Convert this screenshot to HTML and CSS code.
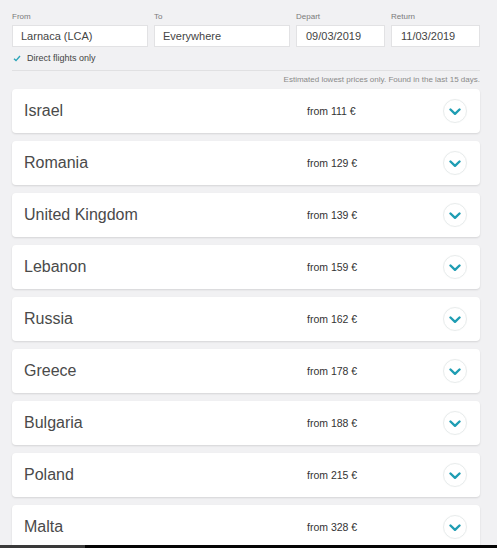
FILE: index.html
```html
<!DOCTYPE html>
<html>
<head>
<meta charset="utf-8">
<link rel="stylesheet" href="styles.css">
</head>
<body>
<div class="page">
  <div class="search">
    <div class="field"><label class="lbl">From</label><div class="box">Larnaca (LCA)</div></div>
    <div class="field"><label class="lbl">To</label><div class="box">Everywhere</div></div>
    <div class="field"><label class="lbl">Depart</label><div class="box">09/03/2019</div></div>
    <div class="field"><label class="lbl">Return</label><div class="box">11/03/2019</div></div>
  </div>
  <div class="direct">
    <svg class="tick" width="8" height="7" viewBox="0 0 8 7"><path d="M1 3.8 L3 5.6 L7 1" fill="none" stroke="#2aa4b8" stroke-width="1.4"/></svg>
    <span>Direct flights only</span>
  </div>
  <div class="sep"></div>
  <div class="note">Estimated lowest prices only. Found in the last 15 days.</div>
  <div class="list">
    <div class="card"><span class="name">Israel</span><span class="price">from 111 €</span><span class="chev"><svg width="12" height="8" viewBox="0 0 12 8"><path d="M1.5 1.5 L6 5.8 L10.5 1.5" fill="none" stroke="#1f9db3" stroke-width="2.4" stroke-linecap="round" stroke-linejoin="round"/></svg></span></div>
    <div class="card"><span class="name">Romania</span><span class="price">from 129 €</span><span class="chev"><svg width="12" height="8" viewBox="0 0 12 8"><path d="M1.5 1.5 L6 5.8 L10.5 1.5" fill="none" stroke="#1f9db3" stroke-width="2.4" stroke-linecap="round" stroke-linejoin="round"/></svg></span></div>
    <div class="card"><span class="name">United Kingdom</span><span class="price">from 139 €</span><span class="chev"><svg width="12" height="8" viewBox="0 0 12 8"><path d="M1.5 1.5 L6 5.8 L10.5 1.5" fill="none" stroke="#1f9db3" stroke-width="2.4" stroke-linecap="round" stroke-linejoin="round"/></svg></span></div>
    <div class="card"><span class="name">Lebanon</span><span class="price">from 159 €</span><span class="chev"><svg width="12" height="8" viewBox="0 0 12 8"><path d="M1.5 1.5 L6 5.8 L10.5 1.5" fill="none" stroke="#1f9db3" stroke-width="2.4" stroke-linecap="round" stroke-linejoin="round"/></svg></span></div>
    <div class="card"><span class="name">Russia</span><span class="price">from 162 €</span><span class="chev"><svg width="12" height="8" viewBox="0 0 12 8"><path d="M1.5 1.5 L6 5.8 L10.5 1.5" fill="none" stroke="#1f9db3" stroke-width="2.4" stroke-linecap="round" stroke-linejoin="round"/></svg></span></div>
    <div class="card"><span class="name">Greece</span><span class="price">from 178 €</span><span class="chev"><svg width="12" height="8" viewBox="0 0 12 8"><path d="M1.5 1.5 L6 5.8 L10.5 1.5" fill="none" stroke="#1f9db3" stroke-width="2.4" stroke-linecap="round" stroke-linejoin="round"/></svg></span></div>
    <div class="card"><span class="name">Bulgaria</span><span class="price">from 188 €</span><span class="chev"><svg width="12" height="8" viewBox="0 0 12 8"><path d="M1.5 1.5 L6 5.8 L10.5 1.5" fill="none" stroke="#1f9db3" stroke-width="2.4" stroke-linecap="round" stroke-linejoin="round"/></svg></span></div>
    <div class="card"><span class="name">Poland</span><span class="price">from 215 €</span><span class="chev"><svg width="12" height="8" viewBox="0 0 12 8"><path d="M1.5 1.5 L6 5.8 L10.5 1.5" fill="none" stroke="#1f9db3" stroke-width="2.4" stroke-linecap="round" stroke-linejoin="round"/></svg></span></div>
    <div class="card"><span class="name">Malta</span><span class="price">from 328 €</span><span class="chev"><svg width="12" height="8" viewBox="0 0 12 8"><path d="M1.5 1.5 L6 5.8 L10.5 1.5" fill="none" stroke="#1f9db3" stroke-width="2.4" stroke-linecap="round" stroke-linejoin="round"/></svg></span></div>
  </div>
</div>
<div class="taskbar"><div class="tb-start"></div></div>
</body>
</html>
```
FILE: styles.css
```css
html, body {
  margin: 0;
  padding: 0;
  background: #f1f1f3;
  font-family: "Liberation Sans", Arial, sans-serif;
  height: 548px;
  overflow: hidden;
}
.page {
  width: 468px;
  padding: 12px 0 0 12px;
}
.search {
  display: grid;
  grid-template-columns: 136px 136px 89px 89px;
  column-gap: 6px;
}
.field {
  display: flex;
  flex-direction: column;
}
.lbl {
  font-size: 8px;
  color: #7a7a7a;
  height: 13px;
  line-height: 10px;
}
.box {
  height: 20px;
  border: 1px solid #e2e2e4;
  background: #fff;
  font-size: 11px;
  color: #444;
  line-height: 20px;
  padding-left: 8px;
}
.field:nth-child(n+3) .box { padding-left: 9px; }
.direct {
  display: flex;
  align-items: center;
  height: 12px;
  margin-top: 5px;
  padding-left: 1px;
  font-size: 9px;
  color: #444;
}
.tick { margin-right: 6px; }
.sep {
  height: 1px;
  background: #e0e0e2;
  margin-top: 6px;
}
.note {
  text-align: right;
  font-size: 8px;
  color: #8a8a8a;
  margin-top: 4px;
  height: 9px;
  line-height: 9px;
}
.list {
  display: flex;
  flex-direction: column;
  gap: 8px;
  margin-top: 5px;
}
.card {
  height: 44px;
  background: #fff;
  border-radius: 4px;
  box-shadow: 0 1px 2px rgba(0,0,0,0.12);
  display: grid;
  grid-template-columns: 283px 1fr 24px;
  align-items: center;
  padding: 0 13px 0 12px;
  box-sizing: border-box;
}
.name {
  font-size: 16px;
  color: #4a4a4a;
}
.price {
  font-size: 10.5px;
  color: #333;
}
.chev {
  width: 22px;
  height: 22px;
  border: 1px solid #e8ecec;
  border-radius: 50%;
  display: flex;
  align-items: center;
  justify-content: center;
  box-shadow: 0 0 1px rgba(0,0,0,0.05);
}
.chev svg { margin-top: 1px; }
.taskbar {
  position: fixed;
  left: 0;
  right: 0;
  bottom: 0;
  height: 3px;
  background: #050505;
}
.tb-start {
  width: 85px;
  height: 3px;
  background: #3a3a3a;
}
```
